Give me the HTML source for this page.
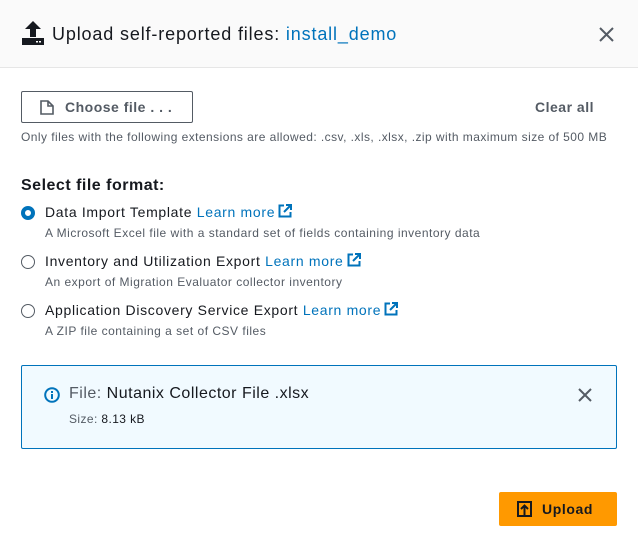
<!DOCTYPE html>
<html><head><meta charset="utf-8"><style>
*{margin:0;padding:0;box-sizing:border-box}
body{width:638px;height:548px;background:#fff;font-family:"Liberation Sans",sans-serif;color:#16191f;position:relative;overflow:hidden}
.a{position:absolute;white-space:nowrap}
.hdr{position:absolute;left:0;top:0;width:638px;height:68px;background:#fafafa;border-bottom:1px solid #e6e6e6}
.link{color:#0073bb}
.desc{font-size:12px;color:#545b64;letter-spacing:0.5px}
.lbl{font-size:14px;letter-spacing:0.68px}
.lbl svg{vertical-align:-1px;margin-left:3px}
.radio{position:absolute;width:14px;height:14px;border-radius:50%;border:1.5px solid #545b64;background:#fff}
.radio.on{border:4px solid #0073bb}
</style></head><body>
<div class="hdr"></div>
<svg class="a" style="left:21px;top:20px" width="24" height="26" viewBox="0 0 24 26"><path d="M12 1 L4 9 H9 V17 H15 V9 H20 Z" fill="#16191f"/><rect x="1" y="18" width="22" height="7" fill="#16191f"/><rect x="15" y="21" width="2" height="1.5" fill="#fff"/><rect x="18" y="21" width="2" height="1.5" fill="#fff"/></svg>
<div class="a" style="left:52px;top:24px;font-size:18px;letter-spacing:0.85px">Upload self-reported files: <span class="link">install_demo</span></div>
<svg class="a" style="left:599px;top:27px" width="15" height="15" viewBox="0 0 15 15"><path d="M1 1L14 14M14 1L1 14" stroke="#545b64" stroke-width="2"/></svg>
<div class="a" style="left:21px;top:91px;width:172px;height:32px;border:1px solid #545b64;border-radius:2px"></div>
<svg class="a" style="left:40px;top:100px" width="14" height="15" viewBox="0 0 14 15"><path d="M1 1H8L13 6V14H1Z" fill="none" stroke="#545b64" stroke-width="1.6"/><path d="M8 1V6H13" fill="none" stroke="#545b64" stroke-width="1.6"/></svg>
<div class="a" style="left:65px;top:99px;font-size:14px;font-weight:bold;color:#545b64;letter-spacing:0.5px">Choose file . . .</div>
<div class="a" style="left:535px;top:99px;font-size:14px;font-weight:bold;color:#545b64;letter-spacing:0.5px">Clear all</div>
<div class="a desc" style="left:21px;top:130px;letter-spacing:0.44px">Only files with the following extensions are allowed: .csv, .xls, .xlsx, .zip with maximum size of 500 MB</div>
<div class="a" style="left:21px;top:177px;font-size:16px;font-weight:bold;letter-spacing:0.5px">Select file format:</div>
<div class="radio on" style="left:21px;top:206px"></div>
<div class="a lbl" style="left:45px;top:204px">Data Import Template <span class="link">Learn more</span><svg width="14" height="14" viewBox="0 0 14 14"><path d="M6 1.5H1.5V12.5H12.5V8" fill="none" stroke="#0073bb" stroke-width="2"/><path d="M8 1H13V6M13 1L6 8" fill="none" stroke="#0073bb" stroke-width="2"/></svg></div>
<div class="a desc" style="left:45px;top:226px">A Microsoft Excel file with a standard set of fields containing inventory data</div>
<div class="radio" style="left:21px;top:255px"></div>
<div class="a lbl" style="left:45px;top:253px">Inventory and Utilization Export <span class="link">Learn more</span><svg width="14" height="14" viewBox="0 0 14 14"><path d="M6 1.5H1.5V12.5H12.5V8" fill="none" stroke="#0073bb" stroke-width="2"/><path d="M8 1H13V6M13 1L6 8" fill="none" stroke="#0073bb" stroke-width="2"/></svg></div>
<div class="a desc" style="left:45px;top:275px">An export of Migration Evaluator collector inventory</div>
<div class="radio" style="left:21px;top:304px"></div>
<div class="a lbl" style="left:45px;top:302px">Application Discovery Service Export <span class="link">Learn more</span><svg width="14" height="14" viewBox="0 0 14 14"><path d="M6 1.5H1.5V12.5H12.5V8" fill="none" stroke="#0073bb" stroke-width="2"/><path d="M8 1H13V6M13 1L6 8" fill="none" stroke="#0073bb" stroke-width="2"/></svg></div>
<div class="a desc" style="left:45px;top:324px">A ZIP file containing a set of CSV files</div>
<div class="a" style="left:21px;top:365px;width:596px;height:84px;background:#f1faff;border:1px solid #0073bb;border-radius:2px"></div>
<svg class="a" style="left:44px;top:387px" width="16" height="16" viewBox="0 0 16 16"><circle cx="8" cy="8" r="6.8" fill="none" stroke="#0073bb" stroke-width="2"/><rect x="7" y="7" width="2" height="5" fill="#0073bb"/><rect x="7" y="4" width="2" height="2" fill="#0073bb"/></svg>
<div class="a" style="left:69px;top:385px;font-size:16px;letter-spacing:0.5px"><span style="color:#545b64">File:</span> Nutanix Collector File .xlsx</div>
<div class="a" style="left:69px;top:412px;font-size:12px;letter-spacing:0.4px"><span style="color:#545b64">Size:</span> 8.13 kB</div>
<svg class="a" style="left:578px;top:388px" width="14" height="14" viewBox="0 0 14 14"><path d="M1 1L13 13M13 1L1 13" stroke="#545b64" stroke-width="2"/></svg>
<div class="a" style="left:499px;top:492px;width:118px;height:34px;background:#ff9900;border-radius:2px"></div>
<svg class="a" style="left:517px;top:501px" width="15" height="16" viewBox="0 0 15 16"><rect x="1" y="1" width="13" height="14" fill="none" stroke="#16191f" stroke-width="2"/><path d="M7.5 14V5M4 8L7.5 4.5L11 8" fill="none" stroke="#16191f" stroke-width="2"/></svg>
<div class="a" style="left:542px;top:501px;font-size:14px;font-weight:bold;letter-spacing:0.6px">Upload</div>
</body></html>
